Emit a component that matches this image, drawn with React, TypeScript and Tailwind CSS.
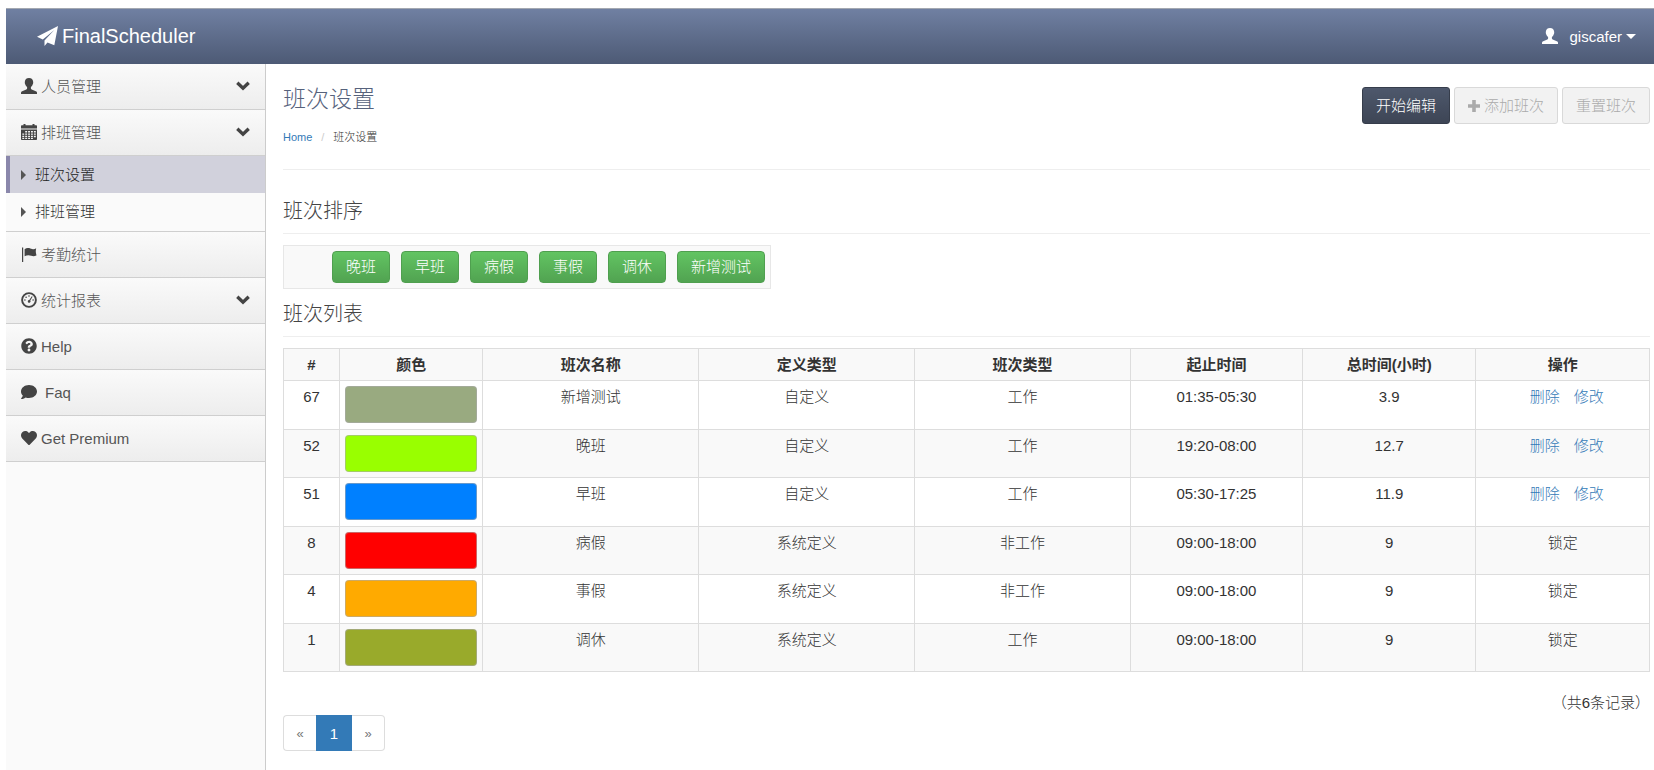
import type { ReactNode } from "react";
import { FaComment, FaHeart, FaQuestionCircle } from "react-icons/fa";

type IconProps = { className?: string };

const SendIcon = ({ className }: IconProps) => (
  <svg viewBox="0 0 21 20" className={className} fill="currentColor" aria-hidden="true">
    <path d="M21 0L0 10.800l5.800 2.700L17.300 4 7.500 14.500V20l3-3.400 6.800 2.600z" />
  </svg>
);

const UserIcon = ({ className }: IconProps) => (
  <svg viewBox="0 0 16 16" className={className} fill="currentColor" aria-hidden="true">
    <path d="M8 0C5.500 0 3.800 1.600 3.800 4.100c0 1.300.2 2 .8 3.100.4.8.9 1.400 1.500 1.900v1.500c0 .5-.3.800-.8 1L1.200 13.200C.5 13.500 0 14 0 14.700V16h16v-1.300c0-.7-.5-1.200-1.200-1.500l-4.100-1.600c-.5-.2-.8-.5-.8-1V9.100c.6-.5 1.100-1.100 1.500-1.900.6-1.100.8-1.800.8-3.100C12.200 1.600 10.500 0 8 0z" />
  </svg>
);

const CalendarIcon = ({ className }: IconProps) => (
  <svg viewBox="0 0 16 16" className={className} aria-hidden="true">
    <path
      fill="currentColor"
      fillRule="evenodd"
      d="M2.500 0h2v1.200h7V0h2v1.200H15c.6 0 1 .4 1 1V4.600H0V2.200c0-.6.4-1 1-1h1.500zM0 5.600h16V15c0 .6-.4 1-1 1H1c-.6 0-1-.4-1-1zM4.200 7v1.400h1.900V7zM7.100 7v1.400H9V7zM10 7v1.400h1.900V7zM12.900 7v1.400h1.900V7zM1.300 9.400v1.400h1.900V9.400zm2.900 0v1.400h1.900V9.400zm2.900 0v1.400H9V9.400zm2.900 0v1.400h1.900V9.400zm2.900 0v1.400h1.900V9.400zM1.300 11.800v1.400h1.900v-1.400zm2.900 0v1.400h1.900v-1.400zm2.900 0v1.400H9v-1.400zm2.900 0v1.400h1.900v-1.400zm2.900 0v1.400h1.900v-1.400zM1.300 14.100v1h1.900v-1zm2.900 0v1h1.900v-1zm2.900 0v1H9v-1zm2.900 0v1h1.900v-1z"
    />
  </svg>
);

const FlagIcon = ({ className }: IconProps) => (
  <svg viewBox="0 0 16 16" className={className} fill="currentColor" aria-hidden="true">
    <path d="M1 1.500h1.200V16H1z" />
    <path d="M3.600 3.200C5 2 6.600 1.600 8.200 2.100c1.800.6 2.700 1.300 4.300 1.100.9-.1 1.600-.5 2.300-.8.200-.1.400 0 .3.300-.5 1.900-.4 4 .3 6.300.1.300 0 .4-.2.500-1.800.9-3.400.8-5 .200-2-.8-4.200-.9-6.600.600z" />
  </svg>
);

const DashboardIcon = ({ className }: IconProps) => (
  <svg viewBox="0 0 16 16" className={className} aria-hidden="true">
    <circle cx="8" cy="8" r="6.900" fill="none" stroke="currentColor" strokeWidth="1.900" />
    <g fill="currentColor">
      <circle cx="3.900" cy="8" r=".8" />
      <circle cx="5.100" cy="5.300" r=".8" />
      <circle cx="8" cy="4" r=".8" />
      <circle cx="12.100" cy="8" r=".8" />
      <path d="M10.800 4.200l.8.500-2.300 3.900a1.400 1.400 0 1 1-1-.6z" />
    </g>
  </svg>
);

const ChevronDown = ({ className }: IconProps) => (
  <svg viewBox="0 0 14 10" className={className} aria-hidden="true">
    <path d="M1.300 1.800L7 7.300l5.700-5.500" fill="none" stroke="currentColor" strokeWidth="3.300" />
  </svg>
);

const PlusIcon = ({ className }: IconProps) => (
  <svg viewBox="0 0 12 12" className={className} fill="currentColor" aria-hidden="true">
    <path d="M4.200 0h3.600v4.200H12v3.600H7.800V12H4.200V7.800H0V4.200h4.200z" />
  </svg>
);

const menuRow =
  "flex h-[46px] w-full items-center gap-1 border-b border-[#cfcfcf] bg-linear-to-b from-[#fafafa] to-[#ededed] px-[15px] pb-px text-left text-[#555]";
const menuIcon = "size-4 shrink-0 text-[#444]";

function MenuGroup({ icon, label }: { icon: ReactNode; label: string }) {
  return (
    <button type="button" className={menuRow}>
      {icon}
      <span className="grow">{label}</span>
      <ChevronDown className="h-[10px] w-[14px] text-[#444]" />
    </button>
  );
}

function MenuLink({ icon, label, spaced = false }: { icon: ReactNode; label: string; spaced?: boolean }) {
  return (
    <a href="#" className={menuRow}>
      {icon}
      <span className={spaced ? "pl-1" : ""}>{label}</span>
    </a>
  );
}

function SubLink({ label, active = false }: { label: string; active?: boolean }) {
  return (
    <a
      href="#"
      aria-current={active ? "page" : undefined}
      className={`flex h-[37px] items-center gap-[9px] border-l-4 pl-[11px] ${
        active ? "border-[#8a87ab] bg-[#d1d1dc] text-[#222]" : "border-transparent text-[#333]"
      }`}
    >
      <svg viewBox="0 0 5 10" className="h-[10px] w-[5px]" fill="#555" aria-hidden="true">
        <path d="M0 0l5 5-5 5z" />
      </svg>
      {label}
    </a>
  );
}

const sortItems = ["晚班", "早班", "病假", "事假", "调休", "新增测试"];

const columns = [
  { title: "#", width: "w-[4.100%]" },
  { title: "颜色", width: "w-[10.500%]" },
  { title: "班次名称", width: "w-[15.800%]" },
  { title: "定义类型", width: "w-[15.800%]" },
  { title: "班次类型", width: "w-[15.800%]" },
  { title: "起止时间", width: "w-[12.600%]" },
  { title: "总时间(小时)", width: "w-[12.700%]" },
  { title: "操作", width: "w-[12.700%]" },
];

const shifts = [
  { id: 67, color: "bg-[#99aa80]", name: "新增测试", custom: true, work: true, time: "01:35-05:30", hours: "3.9" },
  { id: 52, color: "bg-[#99ff00]", name: "晚班", custom: true, work: true, time: "19:20-08:00", hours: "12.7" },
  { id: 51, color: "bg-[#0080ff]", name: "早班", custom: true, work: true, time: "05:30-17:25", hours: "11.9" },
  { id: 8, color: "bg-[#ff0000]", name: "病假", custom: false, work: false, time: "09:00-18:00", hours: "9" },
  { id: 4, color: "bg-[#ffaa00]", name: "事假", custom: false, work: false, time: "09:00-18:00", hours: "9" },
  { id: 1, color: "bg-[#99aa2b]", name: "调休", custom: false, work: true, time: "09:00-18:00", hours: "9" },
];

const cell = "border border-[#ddd] p-[5px] align-top";
const disabledButton =
  "flex h-[37px] items-center gap-1 rounded-[3px] border border-[#d9d9d9] bg-[#f2f2f2] px-[13px] text-[#aaa]";
const sectionTitle = "border-b border-[#eee] pb-[10px] text-[20px] leading-6 text-[#444]";

export default function App() {
  return (
    <div className="flex min-h-screen flex-col bg-white pt-2 pl-[6px] font-['Liberation_Sans','Noto_Sans_CJK_SC',sans-serif] text-[15px] leading-[21px] font-light text-[#333]">
      <header className="flex h-14 items-center justify-between border-t border-[#a3a8b1] bg-linear-to-b from-[#7080a2] to-[#4d5a75] pr-[18px] pb-px pl-[31px] text-white">
        <a href="#" className="flex items-center gap-1 text-[20px]">
          <SendIcon className="h-5 w-[21px]" />
          FinalScheduler
        </a>
        <button type="button" className="flex items-center">
          <UserIcon className="mr-[11px] size-4" />
          giscafer
          <svg viewBox="0 0 10 5" className="ml-1 h-[5px] w-[10px]" fill="currentColor" aria-hidden="true">
            <path d="M0 0h10L5 5z" />
          </svg>
        </button>
      </header>

      <div className="flex grow">
        <nav className="w-[260px] shrink-0 border-r border-[#ccc] bg-[#fafafa]">
          <MenuGroup icon={<UserIcon className={menuIcon} />} label="人员管理" />
          <MenuGroup icon={<CalendarIcon className={menuIcon} />} label="排班管理" />
          <div className="border-b border-[#cfcfcf] pb-px">
            <SubLink label="班次设置" active />
            <SubLink label="排班管理" />
          </div>
          <MenuLink icon={<FlagIcon className={menuIcon} />} label="考勤统计" />
          <MenuGroup icon={<DashboardIcon className={menuIcon} />} label="统计报表" />
          <MenuLink icon={<FaQuestionCircle className={menuIcon} />} label="Help" />
          <MenuLink icon={<FaComment className={menuIcon} />} label="Faq" spaced />
          <MenuLink icon={<FaHeart className={menuIcon} />} label="Get Premium" />
        </nav>

        <main className="min-w-0 grow pr-[4px] pl-[17px]">
          <div className="flex items-start justify-between border-b border-[#eee] pt-[23px] pb-6">
            <div>
              <h1 className="text-[23px] leading-6 text-[#56627c]">班次设置</h1>
              <nav aria-label="breadcrumb" className="mt-[18px] flex text-[11px] leading-4">
                <a href="#" className="text-[#337ab7]">
                  Home
                </a>
                <span className="w-[21px] text-center text-[#ccc]">/</span>
                <span>班次设置</span>
              </nav>
            </div>
            <div className="flex gap-1">
              <button
                type="button"
                className="h-[37px] rounded-[3px] border border-[#363d4b] bg-linear-to-b from-[#4e586c] to-[#3d4555] px-[13px] text-white"
              >
                开始编辑
              </button>
              <button type="button" disabled className={disabledButton}>
                <PlusIcon className="size-3" />
                添加班次
              </button>
              <button type="button" disabled className={disabledButton}>
                重置班次
              </button>
            </div>
          </div>

          <h2 className={`${sectionTitle} pt-[29px]`}>班次排序</h2>
          <ul className="mt-[11px] flex w-fit gap-[11px] border border-[#e7e7e7] bg-[#f9f9f9] py-[5px] pr-[5px] pl-12">
            {sortItems.map((item) => (
              <li key={item}>
                <button
                  type="button"
                  className="h-8 rounded-[4px] border border-[#4f9f4f] bg-linear-to-b from-[#62c462] to-[#51a351] px-[13px] pb-[2px] text-white"
                >
                  {item}
                </button>
              </li>
            ))}
          </ul>

          <h2 className={`${sectionTitle} pt-[13px]`}>班次列表</h2>
          <table className="mt-[11px] w-full table-fixed border-collapse text-center">
            <thead>
              <tr className="bg-[#f9f9f9]">
                {columns.map((column) => (
                  <th key={column.title} scope="col" className={`${cell} ${column.width} font-bold`}>
                    {column.title}
                  </th>
                ))}
              </tr>
            </thead>
            <tbody>
              {shifts.map((shift) => (
                <tr key={shift.id} className="odd:h-[49px] even:h-12 even:bg-[#f9f9f9]">
                  <td className={cell}>{shift.id}</td>
                  <td className={cell}>
                    <div className={`h-[37px] rounded-[4px] border border-[#aaa]/60 bg-clip-border ${shift.color}`} />
                  </td>
                  <td className={cell}>{shift.name}</td>
                  <td className={cell}>{shift.custom ? "自定义" : "系统定义"}</td>
                  <td className={cell}>{shift.work ? "工作" : "非工作"}</td>
                  <td className={cell}>{shift.time}</td>
                  <td className={cell}>{shift.hours}</td>
                  <td className={cell}>
                    {shift.custom ? (
                      <div className="flex justify-center gap-[14px] pl-2 text-[#337ab7]">
                        <a href="#">删除</a>
                        <a href="#">修改</a>
                      </div>
                    ) : (
                      "锁定"
                    )}
                  </td>
                </tr>
              ))}
            </tbody>
          </table>

          <p className="mt-5 text-right">（共6条记录）</p>
          <nav aria-label="pagination" className="mt-[2px] flex text-[#777]">
            <a
              href="#"
              aria-label="上一页"
              className="flex h-9 w-[33px] items-center justify-center rounded-l-[4px] border border-r-0 border-[#ddd] text-[13px]"
            >
              «
            </a>
            <a
              href="#"
              aria-current="page"
              className="flex h-9 w-9 items-center justify-center bg-[#337ab7] text-white"
            >
              1
            </a>
            <a
              href="#"
              aria-label="下一页"
              className="flex h-9 w-[33px] items-center justify-center rounded-r-[4px] border border-l-0 border-[#ddd] text-[13px]"
            >
              »
            </a>
          </nav>
        </main>
      </div>
    </div>
  );
}
